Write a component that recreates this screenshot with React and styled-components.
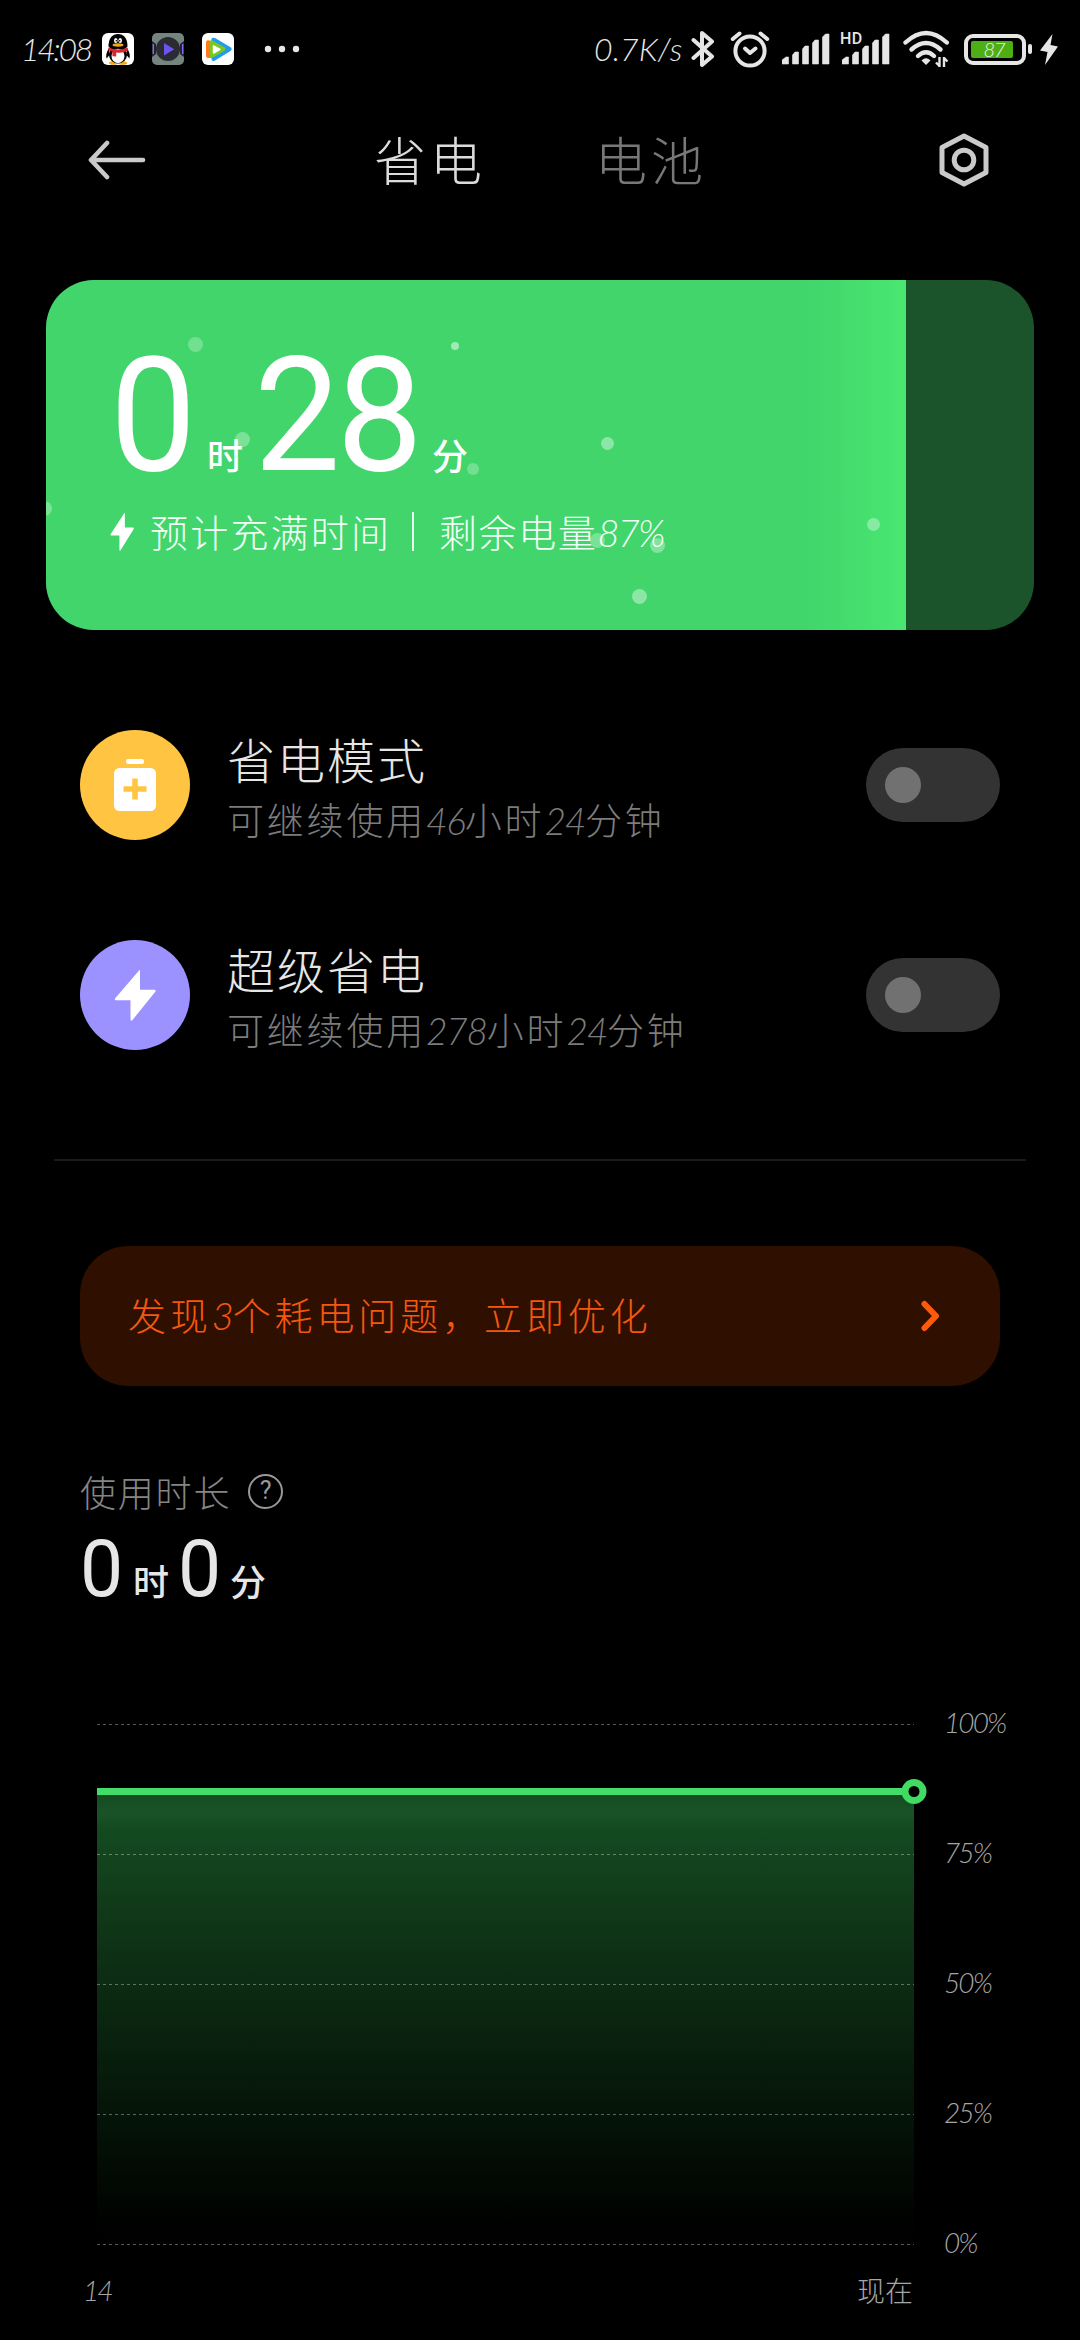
import React from "react";
import styled, { createGlobalStyle } from "styled-components";

const GlobalStyle = createGlobalStyle`
  html, body { margin: 0; padding: 0; background: #000; }
  * { box-sizing: border-box; }
  svg { display: block; flex: none; }
`;

const CJK = `"Noto Sans CJK SC", sans-serif`;
const NUM = `Lato, "Noto Sans CJK SC", sans-serif`;

const Page = styled.main`
  width: 1080px;
  height: 2340px;
  background: #000;
  display: flex;
  flex-direction: column;
  overflow: hidden;
  font-family: ${CJK};
`;

/* ---------- text ---------- */
const Line = styled.span`
  display: block;
  white-space: nowrap;
  font-family: ${CJK};
  font-weight: ${(p) => p.$weight || 300};
  font-size: ${(p) => p.$size}px;
  line-height: ${(p) => p.$lh || p.$size}px;
  letter-spacing: ${(p) => p.$gap || 0}px;
  color: ${(p) => p.$color};
`;
const Digits = styled.span`
  font-family: ${NUM};
  font-style: italic;
  font-weight: 300;
  letter-spacing: ${(p) => p.$gap}px;
`;
function Script({ children, numGap = -1.2, ...rest }) {
  const parts = children.split(/([\d%]+)/);
  return (
    <Line {...rest}>
      {parts.map((t, i) =>
        i % 2 ? <Digits key={i} $gap={numGap}>{t}</Digits> : t
      )}
    </Line>
  );
}

/* ---------- status bar ---------- */
const StatusBar = styled.header`
  height: 98px;
  flex: none;
  display: flex;
  align-items: center;
  padding: 0 22px 0 21px;
`;
const StatusText = styled.span`
  width: ${(p) => p.$width}px;
  font: italic 300 ${(p) => p.$size || 32}px/40px ${NUM};
  letter-spacing: ${(p) => p.$gap}px;
  white-space: nowrap;
  color: #e6e6e6;
`;
const AppIcons = styled.div`
  display: flex;
  align-items: center;
  gap: 18px;
`;
const StatusRight = styled.div`
  margin-left: auto;
  display: flex;
  align-items: center;
`;
const Slot = styled.div`
  margin-left: ${(p) => p.$left}px;
`;
const BatteryShell = styled.div`
  width: 62px;
  height: 31px;
  border: 4px solid #e6e6e6;
  border-radius: 9px;
  padding: 3px;
  display: flex;
`;
const BatteryLevel = styled.div`
  width: 42px;
  height: 17px;
  border-radius: 2px;
  background: #4caf14;
  display: flex;
  justify-content: center;
  align-items: center;
  padding-left: 4px;
  font: italic 300 20px/17px ${NUM};
  letter-spacing: -1px;
  color: #eee;
`;
const BatteryNub = styled.div`
  width: 4px;
  height: 10px;
  margin-left: 2px;
  border-radius: 2px;
  background: #e6e6e6;
`;

const Penguin = () => (
  <svg width="32" height="32" viewBox="0 0 32 32">
    <rect width="32" height="32" rx="6" fill="#fff" />
    <ellipse cx="11.5" cy="30" rx="4.5" ry="1.8" fill="#f5a80f" />
    <ellipse cx="20.5" cy="30" rx="4.5" ry="1.8" fill="#f5a80f" />
    <path d="M7 15C4.500 19 3.500 23 4.600 25.500L7.500 22ZM25 15C27.500 19 28.500 23 27.400 25.500L24.500 22Z" fill="#000" />
    <ellipse cx="16" cy="22" rx="9" ry="8.500" fill="#000" />
    <path d="M6.500 13.500C6.500 5 10.500 1 16 1S25.500 5 25.500 13.500L22 17H10Z" fill="#000" />
    <ellipse cx="16" cy="23" rx="6.500" ry="7.200" fill="#fff" />
    <ellipse cx="13.800" cy="7.400" rx="1.800" ry="2.500" fill="#fff" />
    <ellipse cx="18.200" cy="7.400" rx="1.800" ry="2.500" fill="#fff" />
    <circle cx="14.300" cy="7.700" r=".8" fill="#000" />
    <circle cx="17.700" cy="7.700" r=".8" fill="#000" />
    <ellipse cx="16" cy="12" rx="5.500" ry="1.700" fill="#f5a80f" />
    <path d="M6.500 14.500Q16 18.500 25.500 14.500L25.800 17.800Q20 20.400 14.200 19.400V23.600L10.400 23.200V18.600L6.300 17.600Z" fill="#dc2430" />
  </svg>
);
const DarkPlayer = () => (
  <svg width="32" height="32" viewBox="0 0 32 32">
    <rect width="32" height="32" rx="5" fill="#74857f" />
    <path d="M0 8L4 11V21L0 24ZM32 8L28 11V21L32 24Z" fill="#25232f" />
    <path d="M1.300 11V21M30.700 11V21" stroke="#7d6cf0" strokeWidth="1.400" />
    <circle cx="16" cy="16" r="12" fill="#2b2b33" />
    <path d="M12 10V22.500L22.300 16.200Z" fill="#6a55ee" />
  </svg>
);
const VideoPlayer = () => (
  <svg width="32" height="32" viewBox="0 0 32 32">
    <rect width="32" height="32" rx="6" fill="#fff" />
    <path d="M9.500 5.500C10.500 4.500 12 4.600 13.500 5.300L28.500 14.200Q31 16 28.500 18L13 27.500Q10 29 9.500 26Z" fill="#1f9cf0" />
    <path d="M4 9.500Q4 7 6.500 7.300L9 8V25L6 25Q4 25 4 22.500Z" fill="#ff7a1c" />
    <path d="M8 8.500Q8 6.700 10 7.300L22.500 14.300Q24.500 16 22.500 17.700L10 25Q8 25.600 8 23.500Z" fill="#7ac81e" />
    <path d="M11.500 12.800V20L18 16.400Z" fill="#fff" stroke="#fff" strokeWidth="1.500" strokeLinejoin="round" />
  </svg>
);
const MoreDots = () => (
  <svg width="36" height="8" viewBox="0 0 36 8">
    <circle cx="4" cy="4" r="3.200" fill="#e6e6e6" />
    <circle cx="18" cy="4" r="3.200" fill="#e6e6e6" />
    <circle cx="32" cy="4" r="3.200" fill="#e6e6e6" />
  </svg>
);
const Bluetooth = () => (
  <svg width="24" height="40" viewBox="0 0 24 40" fill="none" stroke="#e6e6e6" strokeWidth="4" strokeLinecap="round" strokeLinejoin="round">
    <path d="M2.500 11L21 27.500L11 36V4L21 12.500L2.500 29" />
  </svg>
);
const Alarm = () => (
  <svg width="40" height="38" viewBox="0 0 40 38" fill="none" stroke="#e6e6e6" strokeWidth="4" strokeLinecap="round">
    <circle cx="20" cy="21" r="14.600" />
    <path d="M2.800 9L9.500 3.500M37.200 9L30.500 3.500" />
    <path d="M15 18.500L20 23L25.500 18.500" strokeLinejoin="round" />
  </svg>
);
const SignalBox = styled.div`
  position: relative;
  width: 48px;
  height: 32px;
`;
const HdTag = styled.span`
  position: absolute;
  left: -2px;
  top: -2px;
  font: 500 16px/16px Roboto, sans-serif;
  letter-spacing: 0.4px;
  color: #e6e6e6;
`;
const Signal = ({ hd }) => (
  <SignalBox>
    <svg width="48" height="32" viewBox="0 0 48 32">
      <path d="M0 31V27L4 24H6.500V31ZM10.500 31V22L13 19H16.500V31ZM20.500 31V16L23 13H26.500V31ZM30.500 31V10L33 7H36.500V31ZM40.500 31V4L43.500 1H47V31Z" fill="#e6e6e6" stroke="#e6e6e6" strokeWidth=".6" strokeLinejoin="round" />
    </svg>
    {hd && <HdTag>HD</HdTag>}
  </SignalBox>
);
const Wifi = () => (
  <svg width="47" height="38" viewBox="0 0 47 38" fill="none" stroke="#e6e6e6" strokeWidth="4.400" strokeLinecap="round">
    <path d="M2.500 12.500Q23 -6.500 43.800 12.500" />
    <path d="M8.500 19.500Q23 6.500 37.500 19.500" />
    <path d="M15 26Q23 18.500 31 26" />
    <path d="M18.500 30.500Q23 26 27.500 30.500L23 35Z" fill="#e6e6e6" stroke="none" />
    <path d="M36.500 37V27M36.500 36L33 32.500M41 27V37M41 28L44.500 31.500" strokeWidth="2.400" strokeLinecap="butt" />
  </svg>
);
const Bolt = ({ w, h, color = "#e6e6e6" }) => (
  <svg width={w} height={h} viewBox="0 0 42 52" preserveAspectRatio="none">
    <path d="M25.500 1L1 29.500Q.5 31 2 31.200H16.500V50.500Q17 52.500 18.500 51L41.500 22.500Q42 21 40.500 20.800H26V1.500Q26 .3 25.500 1Z" fill={color} />
  </svg>
);
const ChargeMark = () => (
  <svg width="18" height="31" viewBox="0 0 18 31">
    <path d="M12.500 0L0 16.500L7.500 18L5 31L18 12.500L10.500 11Z" fill="#e6e6e6" />
  </svg>
);

/* ---------- title bar ---------- */
const TitleBar = styled.nav`
  height: 124px;
  flex: none;
  display: flex;
  align-items: center;
  padding: 0 90px 0 88px;
`;
const Tabs = styled.div`
  flex: 1;
  display: flex;
  padding-left: 228px;
  gap: 109px;
  margin-top: -3px;
`;
const IconButton = styled.button`
  border: 0;
  padding: 0;
  background: none;
`;

/* ---------- charge card ---------- */
const ChargeCard = styled.section`
  position: relative;
  margin: 58px 46px 0;
  height: 350px;
  flex: none;
  border-radius: 48px;
  overflow: hidden;
  background: #1b542b;
`;
const ChargeFill = styled.div`
  width: 860px;
  height: 350px;
  padding: 66px 0 0 64px;
  background: linear-gradient(90deg, #41d56b 0, #41d56b 760px, #49e772 860px);
`;
const Bubble = styled.i`
  position: absolute;
  left: ${(p) => p.$x - 46 - p.$r}px;
  top: ${(p) => p.$y - 280 - p.$r}px;
  width: ${(p) => p.$r * 2}px;
  height: ${(p) => p.$r * 2}px;
  border-radius: 50%;
  background: rgba(255, 255, 255, ${(p) => p.$o});
`;
const Duration = styled.div`
  display: flex;
  align-items: baseline;
  height: ${(p) => p.$h}px;
  margin-top: ${(p) => p.$top || 0}px;
  color: ${(p) => p.$color};
`;
const Figure = styled.span`
  width: ${(p) => p.$width}px;
  font: 400 ${(p) => p.$size}px/${(p) => p.$h}px Roboto, sans-serif;
  letter-spacing: ${(p) => p.$gap || 0}px;
  white-space: nowrap;
  transform: scaleX(0.96);
  transform-origin: left;
`;
const Unit = styled.span`
  width: ${(p) => p.$width}px;
  font: 500 36px/40px ${CJK};
`;
const Estimate = styled.div`
  display: flex;
  align-items: center;
  height: 40px;
  margin-top: 25px;
`;
const Pipe = styled.i`
  width: 2px;
  height: 39px;
  margin: 0 25px 0 26px;
  background: #eafbef;
`;
const EstimateCell = styled.div`
  width: ${(p) => p.$width}px;
`;

/* ---------- modes ---------- */
const Modes = styled.section`
  margin-top: 50px;
  flex: none;
`;
const ModeRow = styled.div`
  height: 210px;
  padding: 0 80px;
  display: flex;
  align-items: center;
`;
const ModeIcon = styled.div`
  width: 110px;
  height: 110px;
  border-radius: 50%;
  background: ${(p) => p.$bg};
  display: flex;
  align-items: center;
  justify-content: center;
`;
const ModeText = styled.div`
  flex: 1;
  padding: 8px 0 0 37px;
  display: flex;
  flex-direction: column;
  gap: 10px;
`;
const Toggle = styled.button`
  width: 134px;
  height: 74px;
  padding: 0 19px;
  border: 0;
  border-radius: 37px;
  background: #333;
  display: flex;
  align-items: center;
`;
const Knob = styled.i`
  width: 36px;
  height: 36px;
  border-radius: 50%;
  background: #717171;
`;
const Divider = styled.hr`
  width: 972px;
  height: 2px;
  margin: 59px 54px 0;
  border: 0;
  flex: none;
  background: #1b1b1b;
`;

/* ---------- warning ---------- */
const Warning = styled.section`
  margin: 85px 80px 0;
  height: 140px;
  flex: none;
  border-radius: 48px;
  background: #2e0f00;
  display: flex;
  align-items: center;
  justify-content: space-between;
  padding: 0 60px 0 48px;
`;
const WarningText = styled.div`
  padding-bottom: 4px;
`;

/* ---------- usage ---------- */
const Usage = styled.section`
  flex: none;
  height: 314px;
  padding: 84px 0 0 80px;
`;
const UsageHead = styled.div`
  display: flex;
  align-items: center;
  height: 42px;
`;
const HelpDot = styled.span`
  width: 35px;
  height: 35px;
  margin-left: 17px;
  border: 2.500px solid #999;
  border-radius: 50%;
  display: flex;
  align-items: center;
  justify-content: center;
  font: 400 25px/30px Roboto, sans-serif;
  color: #999;
`;
const ChartRow = styled.section`
  flex: none;
  height: 560px;
  display: flex;
  padding-left: 97px;
`;
const Scale = styled.div`
  display: flex;
  flex-direction: column;
  gap: 100px;
  padding: 7px 0 0 14px;
`;
const Label = styled.span`
  font: italic 300 28px/30px ${NUM};
  letter-spacing: -1.900px;
  white-space: nowrap;
  color: #a6a6a6;
`;
const TimeAxis = styled.div`
  display: flex;
  justify-content: space-between;
  align-items: center;
  height: 60px;
  padding: 0 167px 0 83px;
`;

const Chart = () => (
  <svg width="833" height="560" viewBox="97 1700 833 560">
    <defs>
      <linearGradient id="area" x1="0" y1="1795" x2="0" y2="2244" gradientUnits="userSpaceOnUse">
        <stop offset="0" stopColor="#174b22" />
        <stop offset=".04" stopColor="#185427" />
        <stop offset=".075" stopColor="#144a20" />
        <stop offset=".3" stopColor="#0f3517" />
        <stop offset=".65" stopColor="#06190a" />
        <stop offset=".95" stopColor="#000200" />
        <stop offset="1" stopColor="#000" />
      </linearGradient>
    </defs>
    <rect x="97" y="1792" width="817" height="452" fill="url(#area)" />
    {[1724, 1854, 1984, 2114, 2244].map((y) => (
      <path key={y} d={`M97 ${y + 0.5}H914`} stroke="#fff" strokeOpacity=".34" strokeDasharray="3 3" />
    ))}
    <rect x="97" y="1788" width="817" height="7" fill="#43dc68" />
    <circle cx="914" cy="1791.500" r="9" fill="#000" stroke="#3fdb62" strokeWidth="7" />
  </svg>
);

const bubbles = [
  [195, 344, 7.5, 0.26], [454.5, 346, 4, 0.5], [242, 439, 7.5, 0.3],
  [607, 443, 6.5, 0.4], [473, 469, 6, 0.26], [44, 508, 7.5, 0.3],
  [597, 540, 7.5, 0.3], [657, 545, 7.5, 0.34], [639, 596, 7.5, 0.4],
  [873.5, 524.5, 6.7, 0.35],
];

export default function App() {
  return (
    <Page>
      <GlobalStyle />
      <StatusBar>
        <StatusText $width={81} $gap={-2.4}>14:08</StatusText>
        <AppIcons>
          <Penguin />
          <DarkPlayer />
          <VideoPlayer />
        </AppIcons>
        <Slot $left={30}><MoreDots /></Slot>
        <StatusRight>
          <StatusText $width={97} $gap={0.1}>0.7K/s</StatusText>
          <Bluetooth />
          <Slot $left={15}><Alarm /></Slot>
          <Slot $left={12}><Signal /></Slot>
          <Slot $left={12}><Signal hd /></Slot>
          <Slot $left={13}><Wifi /></Slot>
          <Slot $left={14}><BatteryShell><BatteryLevel>87</BatteryLevel></BatteryShell></Slot>
          <BatteryNub />
          <Slot $left={8}><ChargeMark /></Slot>
        </StatusRight>
      </StatusBar>

      <TitleBar>
        <IconButton>
          <svg width="58" height="40" viewBox="0 0 58 40" fill="none" stroke="#cacaca" strokeWidth="4.600" strokeLinecap="round" strokeLinejoin="round">
            <path d="M55 20H3M19 3L3 20L19 37" />
          </svg>
        </IconButton>
        <Tabs>
          <Script $size={52} $lh={60} $gap={4} $color="#dcdcdc">省电</Script>
          <Script $size={52} $lh={60} $gap={4} $color="#787878">电池</Script>
        </Tabs>
        <IconButton>
          <svg width="52" height="56" viewBox="0 0 52 56" fill="none" stroke="#cacaca" strokeWidth="5" strokeLinejoin="round">
            <path d="M26 4L48 15.500V40.500L26 52L4 40.500V15.500Z" />
            <circle cx="26" cy="28" r="9.800" />
          </svg>
        </IconButton>
      </TitleBar>

      <ChargeCard>
        <ChargeFill>
          <Duration $h={140} $color="#fff">
            <Figure $size={160} $h={140} $width={97}>0</Figure>
            <Unit $width={47}>时</Unit>
            <Figure $size={160} $h={140} $width={178} $gap={-4}>28</Figure>
            <Unit>分</Unit>
          </Duration>
          <Estimate>
            <Bolt w={24} h={39} color="#fff" />
            <EstimateCell $width={252}>
              <Slot $left={16}>
                <Script $size={38} $gap={2.2} $color="#f2fff6">预计充满时间</Script>
              </Slot>
            </EstimateCell>
            <Pipe />
            <Script $size={38} $gap={1.6} numGap={-1.8} $color="#f2fff6">剩余电量87%</Script>
          </Estimate>
        </ChargeFill>
        {bubbles.map(([x, y, r, o]) => (
          <Bubble key={x} $x={x} $y={y} $r={r} $o={o} />
        ))}
      </ChargeCard>

      <Modes>
        <ModeRow>
          <ModeIcon $bg="#ffc542">
            <svg width="42" height="52" viewBox="0 0 42 52">
              <rect x="12" y="0" width="18" height="5" rx="2" fill="#fff" />
              <rect x="0" y="9" width="42" height="43" rx="5.500" fill="#fff" />
              <path d="M9.500 30H32.500M21 19.500V40.500" stroke="#ffc542" strokeWidth="5.500" />
            </svg>
          </ModeIcon>
          <ModeText>
            <Script $size={48} $lh={52} $gap={2} $color="#e6e6e6">省电模式</Script>
            <Script $size={37} $lh={50} $gap={2.8} $color="#7c7c7c">可继续使用46小时24分钟</Script>
          </ModeText>
          <Toggle><Knob /></Toggle>
        </ModeRow>
        <ModeRow>
          <ModeIcon $bg="#9c92ff"><Bolt w={42} h={52} color="#fff" /></ModeIcon>
          <ModeText>
            <Script $size={48} $lh={52} $gap={2} $color="#e6e6e6">超级省电</Script>
            <Script $size={37} $lh={50} $gap={2.8} $color="#7c7c7c">可继续使用278小时24分钟</Script>
          </ModeText>
          <Toggle><Knob /></Toggle>
        </ModeRow>
      </Modes>

      <Divider />

      <Warning>
        <WarningText>
          <Script $size={38} $lh={50} $gap={3.9} $color="#f4580f">发现3个耗电问题，立即优化</Script>
        </WarningText>
        <svg width="19" height="32" viewBox="0 0 19 32" fill="none" stroke="#ff5a0a" strokeWidth="6" strokeLinecap="round" strokeLinejoin="round">
          <path d="M3.500 4L15 16L3.500 28" />
        </svg>
      </Warning>

      <Usage>
        <UsageHead>
          <Script $size={36} $gap={1.8} $color="#858585">使用时长</Script>
          <HelpDot>?</HelpDot>
        </UsageHead>
        <Duration $h={90} $top={7} $color="#e6e6e6">
          <Figure $size={80} $h={100} $width={53}>0</Figure>
          <Unit $width={45}>时</Unit>
          <Figure $size={80} $h={100} $width={52}>0</Figure>
          <Unit>分</Unit>
        </Duration>
      </Usage>

      <ChartRow>
        <Chart />
        <Scale>
          {["100%", "75%", "50%", "25%", "0%"].map((t) => <Label key={t}>{t}</Label>)}
        </Scale>
      </ChartRow>
      <TimeAxis>
        <Label>14</Label>
        <Script $size={28} $color="#a6a6a6">现在</Script>
      </TimeAxis>
    </Page>
  );
}
